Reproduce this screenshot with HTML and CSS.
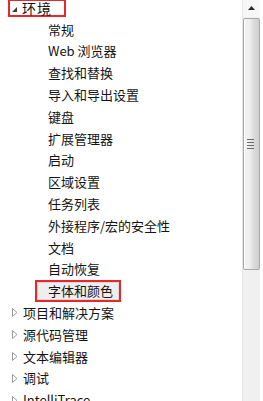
FILE: index.html
```html
<!DOCTYPE html>
<html>
<head>
<meta charset="utf-8">
<link rel="stylesheet" href="styles.css">
</head>
<body>
<div class="window">
  <div class="tree">
    <div class="row top">
      <span class="label boxed">
        <svg class="tri" width="5" height="5" viewBox="0 0 5 5"><path d="M5 0 L5 5 L0 5 Z" fill="#3c3c3c"/></svg>
        <span class="root-text">环境</span>
      </span>
    </div>
    <div class="row child">常规</div>
    <div class="row child">Web 浏览器</div>
    <div class="row child">查找和替换</div>
    <div class="row child">导入和导出设置</div>
    <div class="row child">键盘</div>
    <div class="row child">扩展管理器</div>
    <div class="row child">启动</div>
    <div class="row child">区域设置</div>
    <div class="row child">任务列表</div>
    <div class="row child">外接程序/宏的安全性</div>
    <div class="row child">文档</div>
    <div class="row child">自动恢复</div>
    <div class="row child sel-row"><span class="selected">字体和颜色</span></div>
    <div class="row top"><svg class="tri2" width="6" height="9" viewBox="0 0 6 9"><path d="M0.5 0.5 L5 4.5 L0.5 8.5 Z" fill="none" stroke="#9a9a9a" stroke-width="1"/></svg><span>项目和解决方案</span></div>
    <div class="row top"><svg class="tri2" width="6" height="9" viewBox="0 0 6 9"><path d="M0.5 0.5 L5 4.5 L0.5 8.5 Z" fill="none" stroke="#9a9a9a" stroke-width="1"/></svg><span>源代码管理</span></div>
    <div class="row top"><svg class="tri2" width="6" height="9" viewBox="0 0 6 9"><path d="M0.5 0.5 L5 4.5 L0.5 8.5 Z" fill="none" stroke="#9a9a9a" stroke-width="1"/></svg><span>文本编辑器</span></div>
    <div class="row top"><svg class="tri2" width="6" height="9" viewBox="0 0 6 9"><path d="M0.5 0.5 L5 4.5 L0.5 8.5 Z" fill="none" stroke="#9a9a9a" stroke-width="1"/></svg><span>调试</span></div>
    <div class="row top"><svg class="tri2" width="6" height="9" viewBox="0 0 6 9"><path d="M0.5 0.5 L5 4.5 L0.5 8.5 Z" fill="none" stroke="#9a9a9a" stroke-width="1"/></svg><span>IntelliTrace</span></div>
  </div>
  <div class="scrollbar">
    <div class="btn-up">
      <svg width="7" height="4" viewBox="0 0 7 4"><path d="M3.5 0 L7 4 L0 4 Z" fill="#2a2a2a"/></svg>
    </div>
    <div class="thumb">
      <div class="grip"><i></i><i></i><i></i><i></i></div>
    </div>
    <div class="track"></div>
  </div>
</div>
</body>
</html>
```

FILE: styles.css
```css
html, body {
  margin: 0;
  padding: 0;
  background: #ffffff;
}
.window {
  width: 263px;
  height: 401px;
  overflow: hidden;
  display: flex;
  background: #fff;
}
.tree {
  width: 242px;
  flex: none;
  margin-top: -3.1px;
  font-family: "Noto Sans CJK SC", "Microsoft YaHei", sans-serif;
  font-size: 13px;
  color: #141414;
}
.row {
  height: 21.8px;
  display: flex;
  align-items: center;
  white-space: nowrap;
  line-height: 16px;
}
.row.top {
  padding-left: 12px;
}
.row.top .tri2 {
  margin-right: 5px;
  flex: none;
}
.row.child {
  padding-left: 48px;
}
.label.boxed {
  display: flex;
  flex: none;
  align-items: center;
  box-sizing: border-box;
  width: 58px;
  height: 18px;
  margin-left: -4px;
  padding: 0 0 0 2px;
  border: 2px solid #e8262b;
}
.label.boxed .tri {
  flex: none;
  margin-right: 5px;
  margin-top: 3px;
}
.root-text {
  font-size: 14px;
  line-height: 14px;
  letter-spacing: 1px;
}
.row.sel-row {
  padding-left: 35px;
}
.selected {
  display: flex;
  flex: none;
  align-items: center;
  box-sizing: border-box;
  width: 86px;
  height: 22px;
  padding: 0 0 0 11px;
  border: 2px solid #e8262b;
  background: #eeeeee;
  box-shadow: inset 0 0 0 1px #d8d8d8;
}
.scrollbar {
  width: 18px;
  flex: none;
  display: flex;
  flex-direction: column;
  background: #f0f0f0;
  border-left: 1px solid #e6e6e6;
  box-sizing: border-box;
}
.btn-up {
  height: 17px;
  flex: none;
  display: flex;
  align-items: center;
  justify-content: center;
  background: #f7f7f7;
}
.btn-up svg {
  margin-top: -2px;
}
.thumb {
  height: 252px;
  flex: none;
  margin: 1px 0 0 0;
  box-sizing: border-box;
  border: 1px solid #a9a9a9;
  border-radius: 2px;
  background: linear-gradient(to right, #f2f2f2 0%, #f0f0f0 35%, #d9d9d9 70%, #cfcfcf 100%);
  box-shadow: inset 1px 0 0 #ffffff;
  display: flex;
  align-items: center;
  justify-content: center;
}
.grip {
  display: flex;
  flex-direction: column;
  gap: 2px;
  margin-left: -2px;
}
.grip i {
  display: block;
  width: 7px;
  height: 1px;
  background: #6b6b6b;
}
.track {
  flex: 1;
  background: #f0f0f0;
}
```
